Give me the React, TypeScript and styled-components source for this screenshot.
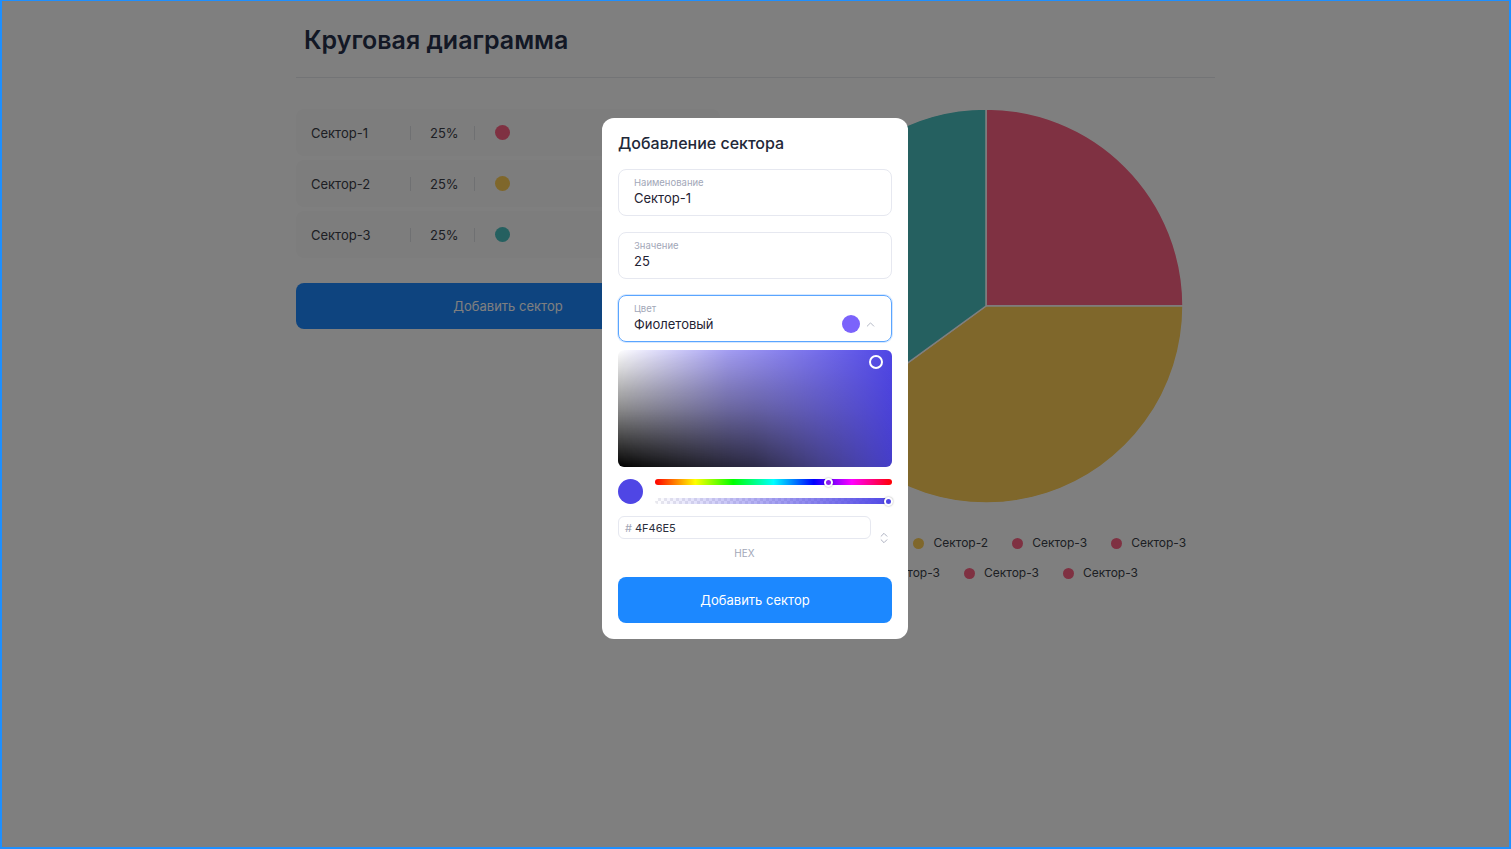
import React from 'react';
import styled, { createGlobalStyle } from 'styled-components';
import { ChevronUp, ChevronsUpDown } from 'lucide-react';

const GlobalStyle = createGlobalStyle`
  html, body {
    margin: 0;
    padding: 0;
    background: #ffffff;
    font-family: Inter, "Noto Sans", "Liberation Sans", sans-serif;
    overflow: hidden;
  }
  * {
    box-sizing: border-box;
  }
`;

// Page shell
const Frame = styled.div`
  position: relative;
  width: 1511px;
  height: 849px;
  border-style: solid;
  border-color: #1e8fff;
  border-width: 1px 2px 2px 2px;
  background: #ffffff;
  overflow: hidden;
`;

const Page = styled.main`
  width: 919px;
  margin: 0 0 0 294px;
`;

const Header = styled.header`
  padding: 23px 8px 21px;
  border-bottom: 1px solid #e6e8ec;
`;

const Title = styled.h1`
  margin: 0;
  font-size: 25px;
  line-height: 32px;
  font-weight: 600;
  color: #26304a;
`;

const Content = styled.section`
  display: grid;
  grid-template-columns: 424px 1fr;
  column-gap: 37px;
  margin-top: 31px;
`;

const SectorList = styled.div`
  display: flex;
  flex-direction: column;
  gap: 4px;
`;

const SectorRow = styled.div`
  display: flex;
  align-items: center;
  height: 47px;
  padding: 0 15px;
  background: #fafafa;
  border-radius: 8px;
  font-size: 13px;
  color: #3a3e48;
`;

const SectorName = styled.span`
  width: 99px;
`;

const Divider = styled.span`
  width: 1px;
  height: 14px;
  background: #dfe1e5;
`;

const SectorValue = styled.span`
  width: 63px;
  padding-left: 19px;
`;

const Dot = styled.span<{ $color: string; $size?: number }>`
  display: inline-block;
  flex: none;
  width: ${(p) => p.$size ?? 15}px;
  height: ${(p) => p.$size ?? 15}px;
  border-radius: 50%;
  background: ${(p) => p.$color};
`;

const RowDot = styled(Dot)`
  margin-left: 20px;
`;

const PrimaryButton = styled.button`
  width: 100%;
  height: 46px;
  border: none;
  border-radius: 8px;
  background: #1c88ff;
  color: #ffffff;
  font-family: inherit;
  font-size: 13px;
  cursor: pointer;
`;

const AddButton = styled(PrimaryButton)`
  margin-top: 25px;
`;

const ChartColumn = styled.div`
  display: flex;
  flex-direction: column;
  align-items: center;
`;

const PieSvg = styled.svg`
  display: block;
  margin-top: -1px;
`;

const Legend = styled.ul`
  list-style: none;
  width: 451px;
  margin: 31px 0 0;
  padding: 0 0 0 31px;
  display: flex;
  flex-wrap: wrap;
  justify-content: center;
  column-gap: 24px;
  row-gap: 14px;
`;

const LegendItem = styled.li`
  display: flex;
  align-items: center;
  gap: 9px;
  font-size: 12px;
  line-height: 16px;
  color: #3a3e48;
`;

// Modal
const Backdrop = styled.div`
  position: absolute;
  inset: 0;
  background: rgba(0, 0, 0, 0.5);
  display: flex;
  justify-content: center;
  align-items: flex-start;
  padding: 117px 1px 0 0;
`;

const Modal = styled.div`
  width: 306px;
  background: #ffffff;
  border-radius: 12px;
  padding: 15px 16px 16px;
`;

const ModalTitle = styled.h2`
  margin: 0 0 16px;
  font-size: 16px;
  line-height: 20px;
  font-weight: 500;
  color: #222838;
`;

const Field = styled.div<{ $focused?: boolean }>`
  position: relative;
  height: 47px;
  padding: 7px 15px 0;
  border: 1px solid ${(p) => (p.$focused ? '#5aa5ff' : '#e6e8f0')};
  border-radius: 8px;
  box-shadow: ${(p) => (p.$focused ? '0 0 0 1px rgba(90, 165, 255, 0.25)' : 'none')};
  & + & {
    margin-top: 16px;
  }
`;

const FieldLabel = styled.div`
  font-size: 9.5px;
  line-height: 12px;
  color: #a2a7b8;
`;

const FieldValue = styled.div`
  font-size: 13px;
  line-height: 18px;
  color: #1f2333;
`;

const SelectAddon = styled.div`
  position: absolute;
  right: 14px;
  top: 19px;
  display: flex;
  align-items: center;
  gap: 4px;
  color: #a2a7b8;
`;

const Picker = styled.div`
  margin-top: 8px;
`;

const Saturation = styled.div`
  position: relative;
  height: 117px;
  border-radius: 6px;
  overflow: hidden;
  background: linear-gradient(to right, #ffffff 0%, #a49ef2 40%, #4f46e5 100%);
  &::after {
    content: '';
    position: absolute;
    inset: 0;
    background: linear-gradient(to bottom, rgba(0, 0, 0, 0) 0%, rgba(0, 0, 0, 0.45) 50%, #000000 100%);
    -webkit-mask-image: linear-gradient(to right, #000 0%, rgba(0, 0, 0, 0.7) 50%, rgba(0, 0, 0, 0.12) 100%);
    mask-image: linear-gradient(to right, #000 0%, rgba(0, 0, 0, 0.7) 50%, rgba(0, 0, 0, 0.12) 100%);
  }
`;

const SaturationCursor = styled.span`
  position: absolute;
  z-index: 1;
  right: 9px;
  top: 5px;
  width: 14px;
  height: 14px;
  border: 2px solid #ffffff;
  border-radius: 50%;
`;

const Controls = styled.div`
  display: flex;
  align-items: center;
  gap: 12px;
  margin-top: 12px;
`;

const Sliders = styled.div`
  flex: 1;
  display: flex;
  flex-direction: column;
  gap: 13px;
`;

const Track = styled.div<{ $kind: 'hue' | 'alpha' }>`
  position: relative;
  height: 6px;
  border-radius: 3px;
  background: ${(p) =>
    p.$kind === 'hue'
      ? 'linear-gradient(to right, #ff0000 0%, #ffff00 17%, #00ff00 33%, #00ffff 50%, #0000ff 67%, #ff00ff 83%, #ff0000 100%)'
      : 'linear-gradient(to right, rgba(79, 70, 229, 0), #4f46e5), repeating-conic-gradient(#e9e9ee 0% 25%, #ffffff 0% 50%) 0 0 / 6px 6px'};
`;

const Thumb = styled.span<{ $pos: number; $color: string }>`
  position: absolute;
  top: 50%;
  left: ${(p) => p.$pos}%;
  width: 9px;
  height: 9px;
  margin: -4.5px 0 0 -4.5px;
  border-radius: 50%;
  background: ${(p) => p.$color};
  border: 2px solid #ffffff;
  box-shadow: 0 0 2px rgba(0, 0, 0, 0.35);
`;

const HexRow = styled.div`
  display: flex;
  align-items: flex-start;
  margin-top: 12px;
`;

const HexColumn = styled.div`
  width: 253px;
  display: flex;
  flex-direction: column;
  align-items: center;
`;

const HexInput = styled.div`
  width: 100%;
  height: 23px;
  display: flex;
  align-items: center;
  gap: 3px;
  padding: 0 6px;
  border: 1px solid #e6e8f0;
  border-radius: 6px;
  font-size: 11px;
  color: #2a2e3c;
`;

const Hash = styled.span`
  color: #a2a7b8;
`;

const HexLabel = styled.div`
  margin-top: 8px;
  font-size: 10px;
  line-height: 12px;
  color: #a2a7b8;
`;

const Spinner = styled.div`
  flex: 1;
  display: flex;
  justify-content: center;
  padding: 15px 0 0 5px;
  color: #a2a7b8;
`;

const SubmitButton = styled(PrimaryButton)`
  margin-top: 18px;
`;

const sectors = [
  { name: 'Сектор-1', value: '25%', color: '#ff6384' },
  { name: 'Сектор-2', value: '25%', color: '#ffce56' },
  { name: 'Сектор-3', value: '25%', color: '#4bc0c0' },
];

const slices = [
  { value: 25, color: '#ff6384' },
  { value: 40, color: '#ffce56' },
  { value: 35, color: '#4bc0c0' },
];

const legend = [
  { name: 'Сектор-1', color: '#ff6384' },
  { name: 'Сектор-2', color: '#ffce56' },
  { name: 'Сектор-3', color: '#ff6384' },
  { name: 'Сектор-3', color: '#ff6384' },
  { name: 'Сектор-3', color: '#ff6384' },
  { name: 'Сектор-3', color: '#ff6384' },
  { name: 'Сектор-3', color: '#ff6384' },
];

const PieChart: React.FC<{ size: number }> = ({ size }) => {
  const c = size / 2;
  const r = c - 1;
  const total = slices.reduce((s, x) => s + x.value, 0);
  let start = 0;
  const point = (a: number) => [c + r * Math.sin(a), c - r * Math.cos(a)];
  return (
    <PieSvg width={size} height={size} viewBox={`0 0 ${size} ${size}`}>
      {slices.map((s, i) => {
        const end = start + (s.value / total) * Math.PI * 2;
        const [x1, y1] = point(start);
        const [x2, y2] = point(end);
        const large = end - start > Math.PI ? 1 : 0;
        const d = `M ${c} ${c} L ${x1} ${y1} A ${r} ${r} 0 ${large} 1 ${x2} ${y2} Z`;
        start = end;
        return <path key={i} d={d} fill={s.color} stroke="#ffffff" strokeWidth={1.5} strokeLinejoin="round" />;
      })}
    </PieSvg>
  );
};

export default function App() {
  return (
    <>
      <GlobalStyle />
      <Frame>
        <Page>
          <Header>
            <Title>Круговая диаграмма</Title>
          </Header>
          <Content>
            <div>
              <SectorList>
                {sectors.map((s) => (
                  <SectorRow key={s.name}>
                    <SectorName>{s.name}</SectorName>
                    <Divider />
                    <SectorValue>{s.value}</SectorValue>
                    <Divider />
                    <RowDot $color={s.color} />
                  </SectorRow>
                ))}
              </SectorList>
              <AddButton>Добавить сектор</AddButton>
            </div>
            <ChartColumn>
              <PieChart size={396} />
              <Legend>
                {legend.map((l, i) => (
                  <LegendItem key={i}>
                    <Dot $color={l.color} $size={11} />
                    {l.name}
                  </LegendItem>
                ))}
              </Legend>
            </ChartColumn>
          </Content>
        </Page>

        <Backdrop>
          <Modal>
            <ModalTitle>Добавление сектора</ModalTitle>
            <Field>
              <FieldLabel>Наименование</FieldLabel>
              <FieldValue>Сектор-1</FieldValue>
            </Field>
            <Field>
              <FieldLabel>Значение</FieldLabel>
              <FieldValue>25</FieldValue>
            </Field>
            <Field $focused>
              <FieldLabel>Цвет</FieldLabel>
              <FieldValue>Фиолетовый</FieldValue>
              <SelectAddon>
                <Dot $color="#7b63fb" $size={18} />
                <ChevronUp size={13} strokeWidth={1.5} />
              </SelectAddon>
            </Field>

            <Picker>
              <Saturation>
                <SaturationCursor />
              </Saturation>
              <Controls>
                <Dot $color="#4f46e5" $size={25} />
                <Sliders>
                  <Track $kind="hue">
                    <Thumb $pos={73.4} $color="#8a1cf0" />
                  </Track>
                  <Track $kind="alpha">
                    <Thumb $pos={98.5} $color="#4f46e5" />
                  </Track>
                </Sliders>
              </Controls>
              <HexRow>
                <HexColumn>
                  <HexInput>
                    <Hash>#</Hash>
                    4F46E5
                  </HexInput>
                  <HexLabel>HEX</HexLabel>
                </HexColumn>
                <Spinner>
                  <ChevronsUpDown size={14} strokeWidth={1.5} />
                </Spinner>
              </HexRow>
            </Picker>

            <SubmitButton>Добавить сектор</SubmitButton>
          </Modal>
        </Backdrop>
      </Frame>
    </>
  );
}
